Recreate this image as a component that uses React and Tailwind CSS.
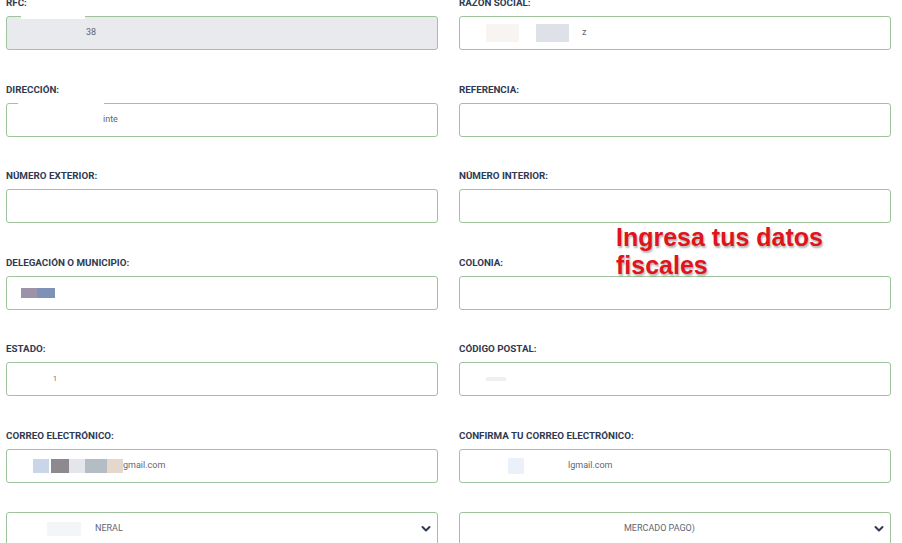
import React from "react";

const labelCls =
  "h-[14px] text-[9.8px] leading-[14px] font-bold uppercase text-[#2f3a52]";
const boxBase =
  "relative h-[34px] rounded-[3px] border border-[#9fc39c] text-[9px] text-[#5f6672] flex items-center pl-[14px] pr-[6px]";

function Field({ label, disabled, children }) {
  return (
    <div className="flex flex-col gap-[6px]">
      <div className={labelCls}>{label}</div>
      <div className={boxBase + (disabled ? " bg-[#e9eaee]" : " bg-white")}>{children}</div>
    </div>
  );
}

/* blurred redaction swatch, placed in flow */
function Swatch({ w, h = 16, c, ml = 0 }) {
  return <span className="inline-block shrink-0" style={{ width: w, height: h, background: c, marginLeft: ml }} />;
}

/* white strip covering a part of the top border (redaction over the frame) */
function Cover({ from, w }) {
  return <span className="absolute top-[-2px] h-[4px] bg-white" style={{ left: from, width: w }} />;
}

function Chevron() {
  return (
    <svg className="ml-auto shrink-0" width="10" height="8" viewBox="0 0 10 8">
      <path d="M1.5 2 L5 5.5 L8.5 2" fill="none" stroke="#2f3a52" strokeWidth="2" strokeLinecap="round" strokeLinejoin="round" />
    </svg>
  );
}

export default function App() {
  return (
    <div
      className="relative w-[902px] h-[543px] overflow-hidden bg-white"
      style={{ fontFamily: "Roboto, 'Liberation Sans', sans-serif" }}
    >
      <div className="mt-[-4px] pl-[6px] pr-[11px]">
        <div className="grid grid-cols-2 gap-x-[21px] gap-y-[32.5px]">
          <Field label="RFC:" disabled>
            <Cover from={14} w={64} />
            <span className="ml-[65px]">38</span>
          </Field>
          <Field label="Razon social:">
            <Swatch w={33} h={18} c="#f8f4f2" ml={12} />
            <Swatch w={33} h={18} c="#dfe1e8" ml={17} />
            <span className="ml-[13px]">z</span>
          </Field>

          <Field label="Dirección:">
            <Cover from={11} w={86} />
            <span className="ml-[82px]">inte</span>
          </Field>
          <Field label="Referencia:" />

          <Field label="Número exterior:" />
          <Field label="Número interior:" />

          <Field label="Delegación o municipio:">
            <Swatch w={16} h={10} c="#9c93aa" />
            <Swatch w={18} h={10} c="#7e92b8" />
          </Field>
          <Field label="Colonia:" />

          <Field label="Estado:">
            <span className="ml-[32px] text-[7px]">1</span>
          </Field>
          <Field label="Código postal:">
            <Swatch w={20} h={4} c="#eef0f3" ml={12} />
          </Field>

          <Field label="Correo electrónico:">
            <Swatch w={16} h={14} c="#c9d6e8" ml={12} />
            <Swatch w={18} h={14} c="#8e888f" ml={2} />
            <Swatch w={16} h={14} c="#e4e6eb" />
            <Swatch w={22} h={14} c="#b4bcc4" />
            <Swatch w={16} h={14} c="#e3d8cb" />
            <span>gmail.com</span>
          </Field>
          <Field label="Confirma tu correo electrónico:">
            <Swatch w={16} h={16} c="#eaf1f8" ml={34} />
            <span className="ml-[44px]">lgmail.com</span>
          </Field>
        </div>

        <div className="grid grid-cols-2 gap-x-[21px] mt-[29px]">
          <div className={boxBase + " bg-white"}>
            <Swatch w={34} h={14} c="#f4f5f7" ml={26} />
            <span className="ml-[14px]">NERAL</span>
            <Chevron />
          </div>
          <div className={boxBase + " bg-white"}>
            <span className="ml-[150px]">MERCADO PAGO)</span>
            <Chevron />
          </div>
        </div>
      </div>

      <div
        className="absolute left-[616px] top-[223px] text-[25px] leading-[28px] font-bold text-[#e0141c] [text-shadow:1px_2px_2px_rgba(0,0,0,0.3)]"
        style={{ fontFamily: "'Liberation Sans', Arial, sans-serif" }}
      >
        Ingresa tus datos
        <br />
        fiscales
      </div>
    </div>
  );
}
